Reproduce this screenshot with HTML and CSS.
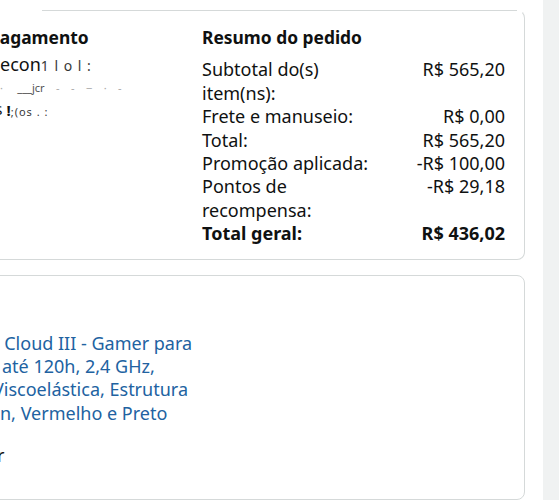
FILE: index.html
```html
<!DOCTYPE html>
<html lang="pt-BR">
<head>
<meta charset="utf-8">
<title>Resumo do pedido</title>
<link rel="stylesheet" href="styles.css">
</head>
<body>
<div class="page">
  <main class="main">
    <section class="card summary-card">
      <div class="pay-col">
        <h2 class="heading">Pagamento</h2>
        <div class="pay-line pay-l1">econ<span class="frag">1 l o l :</span></div>
        <div class="pay-line pay-l2"><span class="faint">·&nbsp;&nbsp;&nbsp;&nbsp;&nbsp;</span>___<span class="frag">jcr</span><span class="faint">&nbsp;&nbsp;&nbsp; -&nbsp;&nbsp;&nbsp; -&nbsp;&nbsp;&nbsp; ‒&nbsp;&nbsp;&nbsp; ·&nbsp;&nbsp;&nbsp; -</span></div>
        <div class="pay-line pay-l3">$ <b class="mark">!</b><span class="frag">;(os . :</span></div>
      </div>
      <div class="sum-col">
        <h2 class="heading">Resumo do pedido</h2>
        <dl class="rows">
          <dt>Subtotal do(s) item(ns):</dt><dd>R$ 565,20</dd>
          <dt>Frete e manuseio:</dt><dd>R$ 0,00</dd>
          <dt>Total:</dt><dd>R$ 565,20</dd>
          <dt>Promoção aplicada:</dt><dd>-R$ 100,00</dd>
          <dt>Pontos de recompensa:</dt><dd>-R$ 29,18</dd>
          <dt class="grand">Total geral:</dt><dd class="grand">R$ 436,02</dd>
        </dl>
      </div>
    </section>
    <section class="card item-card">
      <a class="title" href="#">
        <span class="ln ln1">X Cloud III - Gamer para</span>
        <span class="ln ln2">até 120h, 2,4 GHz,</span>
        <span class="ln ln3">Viscoelástica, Estrutura</span>
        <span class="ln ln4">n, Vermelho e Preto</span>
      </a>
      <div class="seller">r</div>
    </section>
  </main>
  <aside class="rail"></aside>
</div>
</body>
</html>
```
FILE: styles.css
```css
* { box-sizing: border-box; }
html, body { margin: 0; padding: 0; }
body {
  width: 559px;
  height: 500px;
  overflow: hidden;
  background: #ffffff;
  font-family: "Noto Sans", "DejaVu Sans", sans-serif;
  color: #0f1111;
}
.page {
  display: flex;
  height: 500px;
}
.main {
  width: 543px;
  flex: none;
  background: #ffffff;
  padding-top: 10px;
  display: flex;
  flex-direction: column;
  gap: 15px;
}
.rail {
  flex: 1;
  background: #f0f2f2;
}
.card {
  border: 1px solid #d5d9d9;
  border-radius: 8px;
  margin-left: -60px;
  width: 585px;
  background: #fff;
}
.summary-card {
  position: relative;
  border-top-color: transparent;
  display: grid;
  grid-template-columns: 213px 1fr;
  padding: 15px 18px 13px 48px;
}
.summary-card::before {
  content: "";
  position: absolute;
  top: -1px;
  left: 101px;
  right: 7px;
  height: 1px;
  background: #d5d9d9;
}
.heading {
  margin: 0 0 9px;
  font-size: 17.4px;
  line-height: 23.4px;
  font-weight: 700;
}
.pay-line {
  font-size: 18px;
  line-height: 23.4px;
  white-space: nowrap;
}
.pay-l1 { margin-left: 11px; margin-top: -5px; }
.pay-l1 .frag { font-size: 14px; letter-spacing: 1px; }
.pay-l2 { margin-left: 11px; font-size: 11px; line-height: 20px; color: #333; }
.pay-l3 { margin-left: 5px; font-size: 15px; line-height: 24px; }
.pay-l3 .frag { font-size: 11px; letter-spacing: 1px; }
.mark { font-weight: 700; }
.frag { opacity: 0.85; }
.faint { color: #aaa; }
.rows {
  margin: 0;
  display: grid;
  grid-template-columns: 192px 1fr;
  font-size: 18px;
  line-height: 23.4px;
}
.rows dt, .rows dd { margin: 0; }
.rows dd { text-align: right; padding-right: 1px; }
.rows .grand { font-weight: 700; }
.item-card {
  flex: 1;
  padding: 56px 0 0 60px;
}
.title {
  display: block;
  color: #2162a1;
  text-decoration: none;
  font-size: 18px;
  line-height: 23.4px;
}
.ln { display: block; white-space: nowrap; }
.ln1 { margin-left: -12px; }
.ln2 { margin-left: 1px; }
.ln3 { margin-left: -8px; }
.ln4 { margin-left: -1px; }
.seller {
  margin-top: 19px;
  margin-left: -4px;
  font-size: 18px;
  line-height: 23.4px;
}
```
